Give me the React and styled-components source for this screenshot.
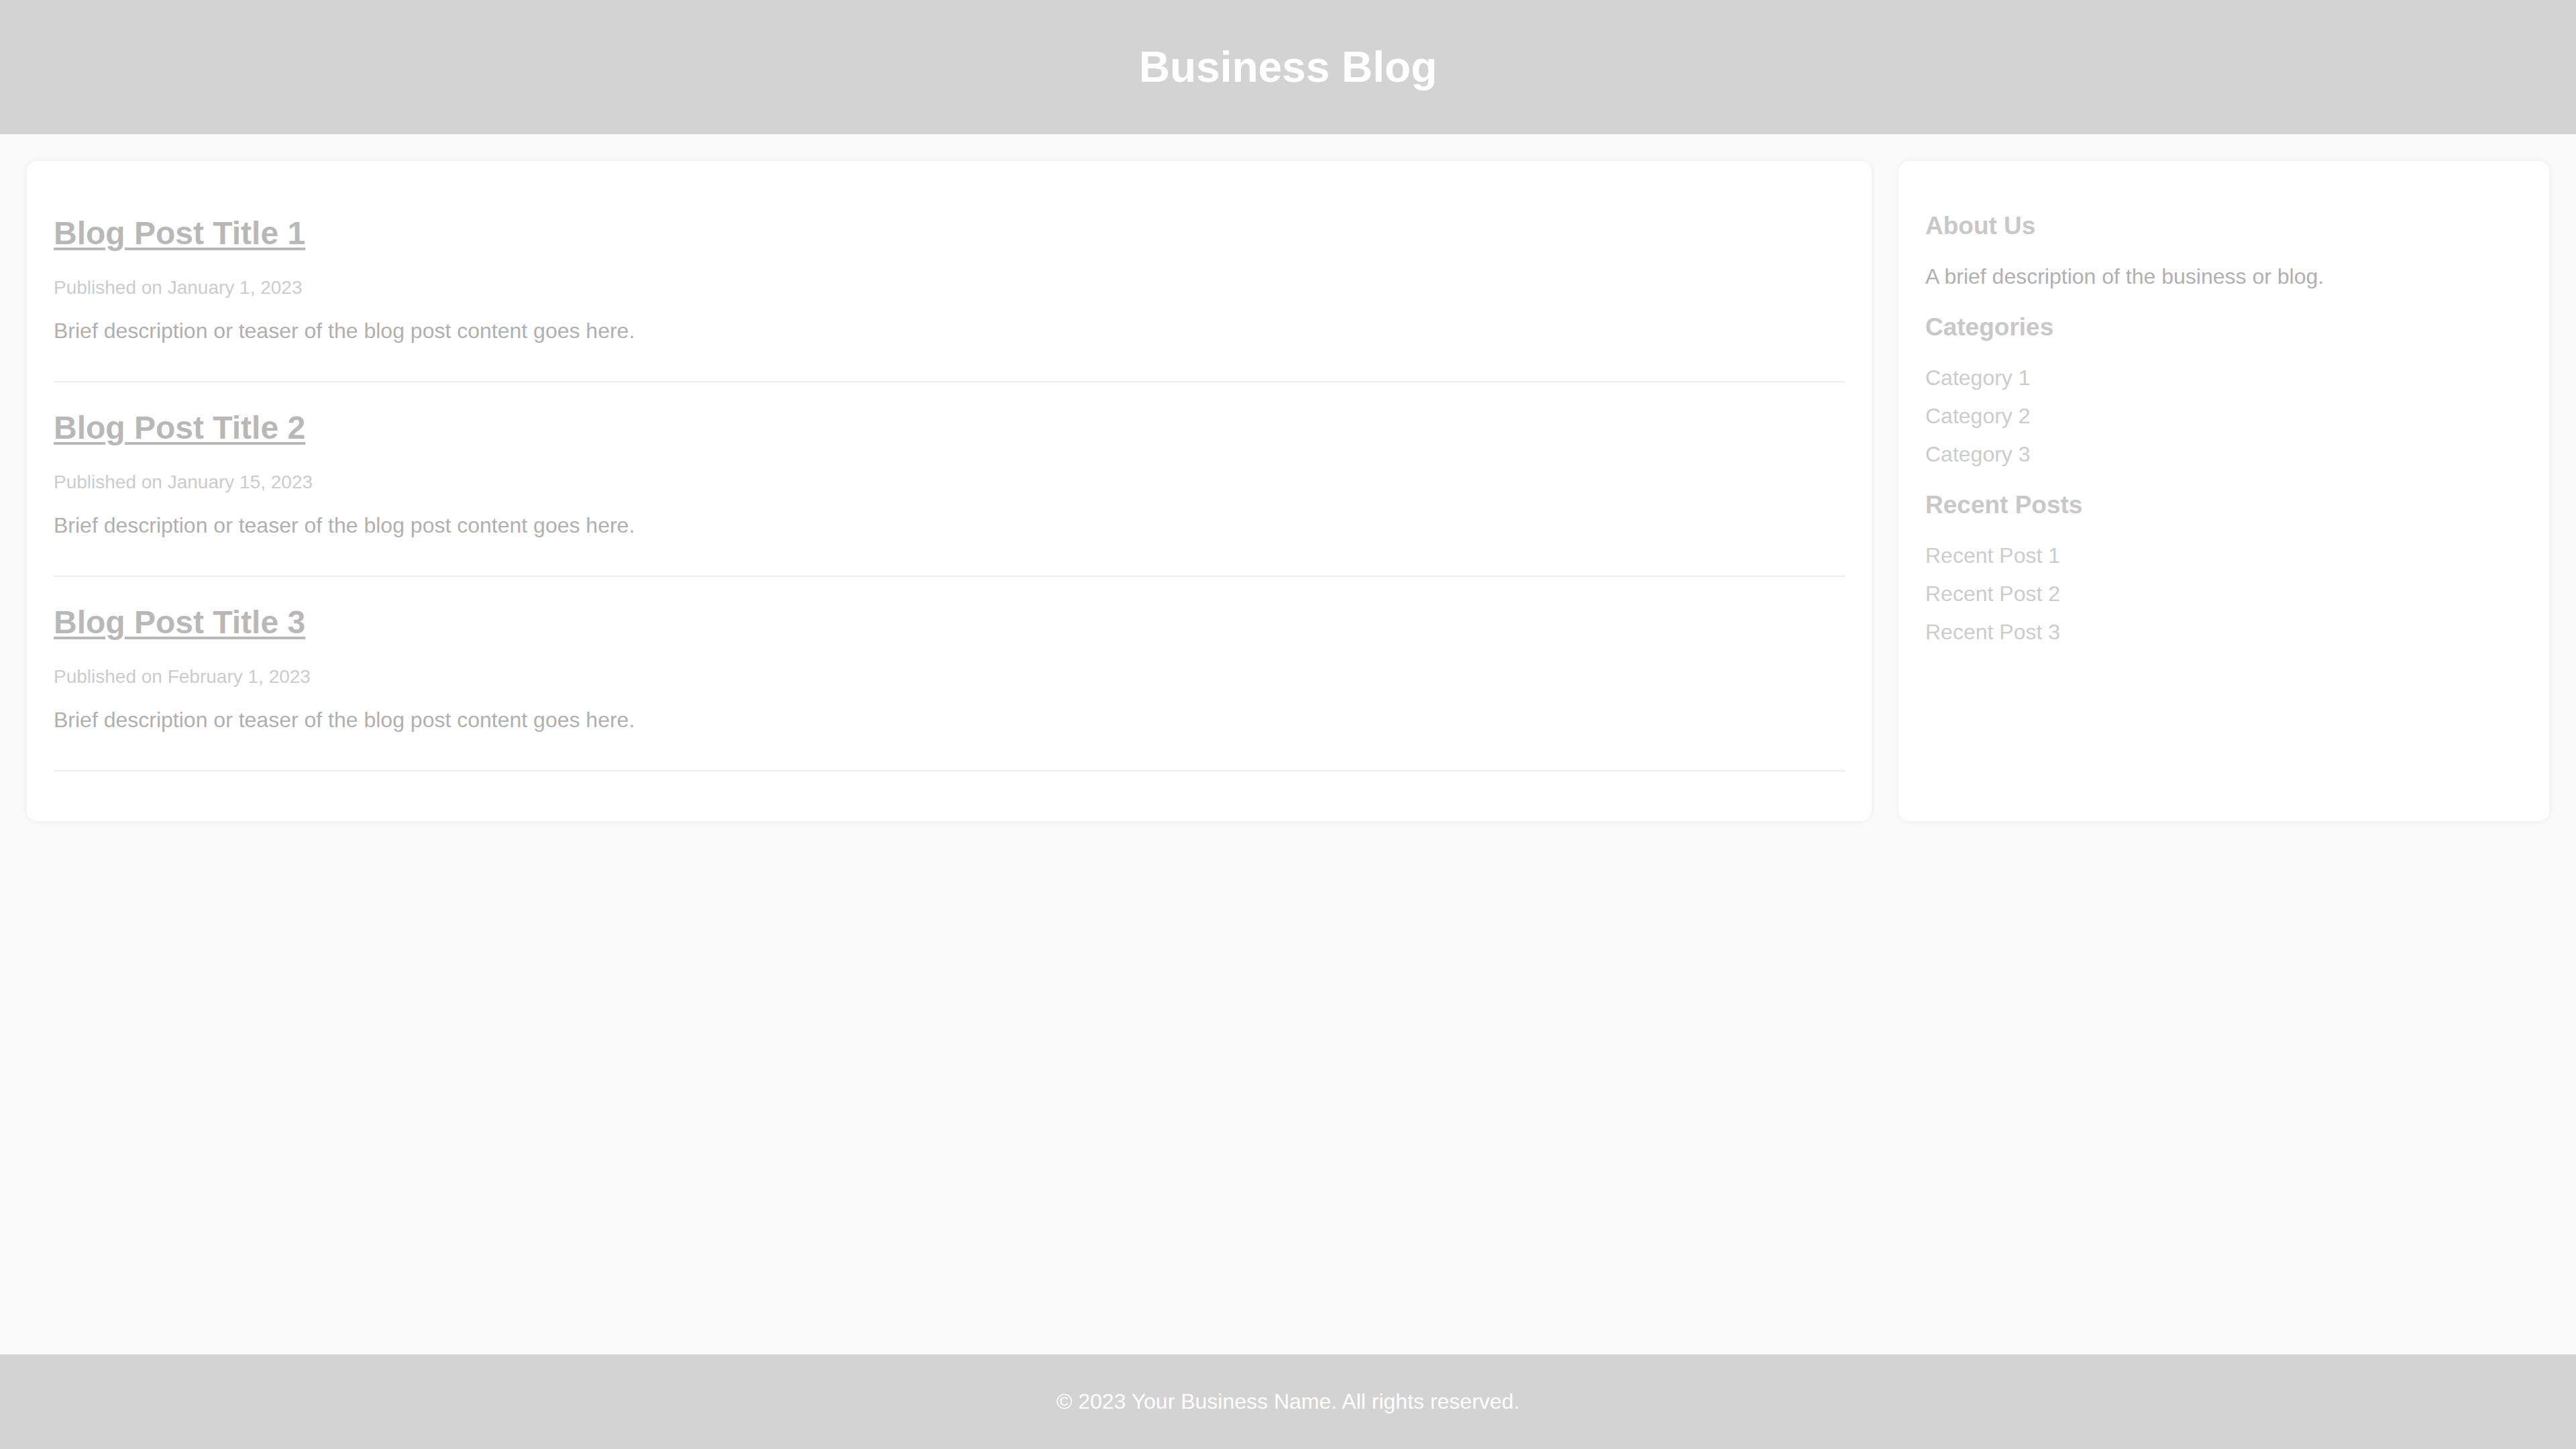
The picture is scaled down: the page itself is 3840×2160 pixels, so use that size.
import React from 'react';
import styled, { createGlobalStyle } from 'styled-components';

const GlobalStyle = createGlobalStyle`
  html, body {
    margin: 0;
    padding: 0;
  }
  body {
    background: #fafafa;
    font-family: "Liberation Sans", Arial, sans-serif;
    font-size: 32px;
  }
`;

const Page = styled.div`
  min-height: 100vh;
  display: flex;
  flex-direction: column;
`;

const Header = styled.header`
  background: #d3d3d3;
  padding: 63px 0;
  text-align: center;
`;

const SiteTitle = styled.h1`
  margin: 0;
  font-size: 64px;
  font-weight: bold;
  color: #ffffff;
`;

const Main = styled.main`
  flex: 1;
  padding: 40px;
`;

const Columns = styled.div`
  display: flex;
  gap: 40px;
`;

const Card = styled.div`
  flex: ${props => props.grow};
  background: #ffffff;
  border-radius: 16px;
  box-shadow: 0 0 10px rgba(0, 0, 0, 0.06);
  padding: 40px;
`;

const Post = styled.article`
  padding-bottom: 20px;
  margin-bottom: 34px;
  border-bottom: 2px solid #eeeeee;
`;

const PostTitle = styled.h2`
  margin: 40px 0 38px;
  font-size: 48px;
  font-weight: bold;

  a {
    color: #b8b8b8;
    text-decoration: underline;
    text-decoration-thickness: 4px;
    text-underline-offset: 5px;
  }
`;

const Meta = styled.p`
  margin: 0;
  font-size: 28px;
  color: #cccccc;
`;

const Teaser = styled.p`
  margin: 30px 0 36px;
  font-size: 32px;
  color: #b0b0b0;
`;

const SideHeading = styled.h3`
  margin: 36px 0;
  font-size: 37px;
  font-weight: bold;
  color: #c8c8c8;
`;

const SideText = styled.p`
  margin: 32px 0;
  color: #b0b0b0;
`;

const SideList = styled.ul`
  list-style: none;
  margin: 32px 0;
  padding: 0;
`;

const SideItem = styled.li`
  margin-bottom: 20px;

  a {
    color: #cccccc;
    text-decoration: none;
  }
`;

const Footer = styled.footer`
  background: #d3d3d3;
  padding: 52px 0;
  text-align: center;
`;

const FooterText = styled.p`
  margin: 0;
  color: #ffffff;
  font-size: 32px;
`;

const posts = [
  { title: 'Blog Post Title 1', date: 'January 1, 2023' },
  { title: 'Blog Post Title 2', date: 'January 15, 2023' },
  { title: 'Blog Post Title 3', date: 'February 1, 2023' },
];

const categories = ['Category 1', 'Category 2', 'Category 3'];
const recent = ['Recent Post 1', 'Recent Post 2', 'Recent Post 3'];

const App = () => (
  <Page>
    <GlobalStyle />
    <Header>
      <SiteTitle>Business Blog</SiteTitle>
    </Header>

    <Main>
      <Columns>
        <Card grow={3}>
          {posts.map(post => (
            <Post key={post.title}>
              <PostTitle>
                <a href="#">{post.title}</a>
              </PostTitle>
              <Meta>Published on {post.date}</Meta>
              <Teaser>Brief description or teaser of the blog post content goes here.</Teaser>
            </Post>
          ))}
        </Card>

        <Card grow={1}>
          <SideHeading>About Us</SideHeading>
          <SideText>A brief description of the business or blog.</SideText>
          <SideHeading>Categories</SideHeading>
          <SideList>
            {categories.map(c => (
              <SideItem key={c}><a href="#">{c}</a></SideItem>
            ))}
          </SideList>
          <SideHeading>Recent Posts</SideHeading>
          <SideList>
            {recent.map(r => (
              <SideItem key={r}><a href="#">{r}</a></SideItem>
            ))}
          </SideList>
        </Card>
      </Columns>
    </Main>

    <Footer>
      <FooterText>© 2023 Your Business Name. All rights reserved.</FooterText>
    </Footer>
  </Page>
);

export default App;
